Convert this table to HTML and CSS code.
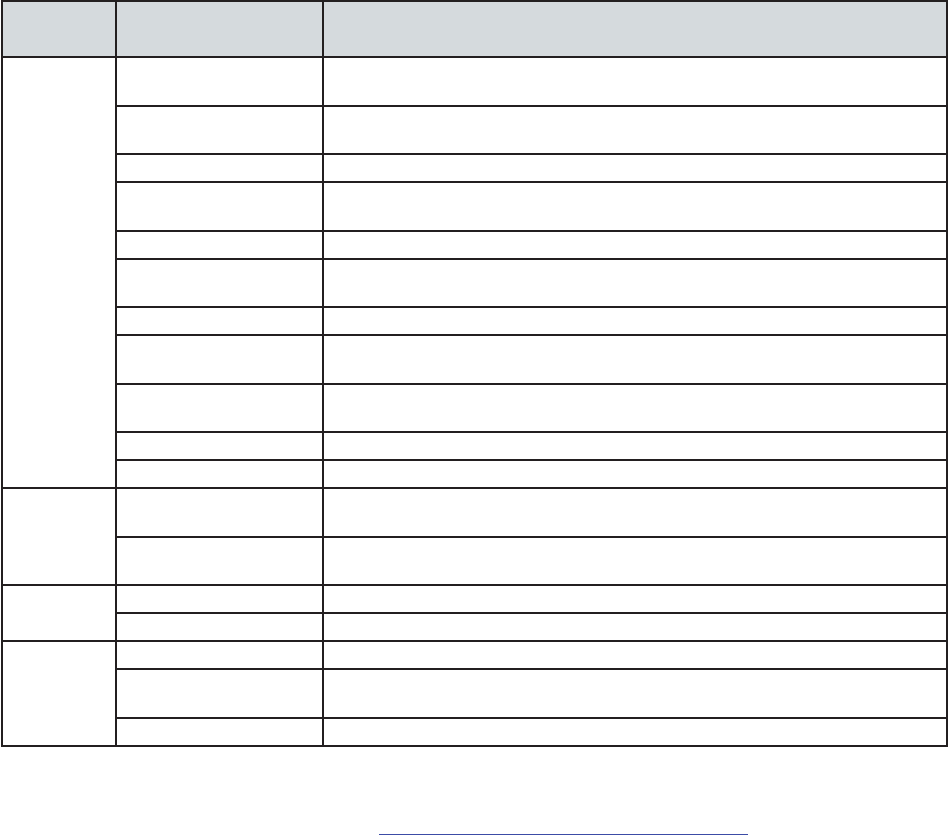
FILE: index.html
```html
<!DOCTYPE html>
<html lang="en">
<head>
<meta charset="utf-8">
<title>Table</title>
<link rel="stylesheet" href="styles.css">
</head>
<body>
<div class="page">
  <table class="grid">
    <colgroup>
      <col class="c1">
      <col class="c2">
      <col class="c3">
    </colgroup>
    <thead>
      <tr class="head"><th></th><th></th><th></th></tr>
    </thead>
    <tbody>
      <tr class="tall"><td rowspan="11"></td><td></td><td></td></tr>
      <tr class="tall"><td></td><td></td></tr>
      <tr class="short"><td></td><td></td></tr>
      <tr class="tall"><td></td><td></td></tr>
      <tr class="short"><td></td><td></td></tr>
      <tr class="tall"><td></td><td></td></tr>
      <tr class="short"><td></td><td></td></tr>
      <tr class="tall"><td></td><td></td></tr>
      <tr class="tall"><td></td><td></td></tr>
      <tr class="short"><td></td><td></td></tr>
      <tr class="short"><td></td><td></td></tr>
      <tr class="tall"><td rowspan="2"></td><td></td><td></td></tr>
      <tr class="tall"><td></td><td></td></tr>
      <tr class="short"><td rowspan="2"></td><td></td><td></td></tr>
      <tr class="short"><td></td><td></td></tr>
      <tr class="short"><td rowspan="3"></td><td></td><td></td></tr>
      <tr class="tall"><td></td><td></td></tr>
      <tr class="short"><td></td><td></td></tr>
    </tbody>
  </table>
  <div class="footer">
    <a class="link" href="#"></a>
  </div>
</div>
</body>
</html>
```

FILE: styles.css
```css
html, body {
  margin: 0;
  padding: 0;
  background: #ffffff;
  font-family: "Liberation Sans", Arial, sans-serif;
}

.page {
  padding: 0 0 0 1px;
}

.grid {
  border-collapse: collapse;
  table-layout: fixed;
  width: 945px;
}

.c1 { width: 114px; }
.c2 { width: 207px; }
.c3 { width: 624px; }

.grid th,
.grid td {
  border: 2px solid #231f20;
  padding: 0;
}

.head th {
  background: #d5dadd;
}

.head { height: 56px; }
.tall { height: 48.5px; }
.short { height: 28px; }

.footer {
  padding-top: 87px;
  padding-left: 378px;
}

.link {
  display: block;
  width: 369px;
  height: 0;
  border-bottom: 2px solid #3c4ca6;
}
```
